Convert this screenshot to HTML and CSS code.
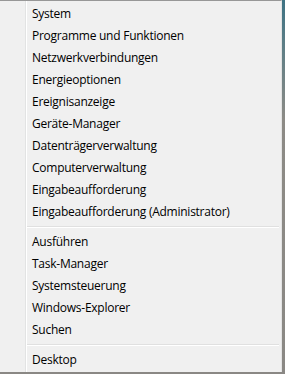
FILE: index.html
```html
<!DOCTYPE html>
<html>
<head>
  <meta charset="UTF-8">
  <title>Win+X Menü</title>
  <link rel="stylesheet" href="styles.css">
</head>
<body>
  <div class="menu">
    <ul class="group">
      <li>System</li>
      <li>Programme und Funktionen</li>
      <li>Netzwerkverbindungen</li>
      <li>Energieoptionen</li>
      <li>Ereignisanzeige</li>
      <li>Geräte-Manager</li>
      <li>Datenträgerverwaltung</li>
      <li>Computerverwaltung</li>
      <li>Eingabeaufforderung</li>
      <li>Eingabeaufforderung (Administrator)</li>
    </ul>
    <div class="sep"></div>
    <ul class="group">
      <li>Ausführen</li>
      <li>Task-Manager</li>
      <li>Systemsteuerung</li>
      <li>Windows-Explorer</li>
      <li>Suchen</li>
    </ul>
    <div class="sep"></div>
    <ul class="group">
      <li>Desktop</li>
    </ul>
  </div>
</body>
</html>
```

FILE: styles.css
```css
*, *:before, *:after {
  box-sizing: border-box;
}

html, body {
  margin: 0;
  height: 100%;
}

body {
  background: linear-gradient(to bottom, #3d7283 0, #5a7d86 40px, #8d8b86 120px, #8a8884 100%);
  font-family: "Open Sans", "Noto Sans", sans-serif;
  font-size: 12px;
  letter-spacing: -0.25px;
  color: #000;
  overflow: hidden;
}

.menu {
  width: 282px;
  height: 372px;
  background: #f0f0f0;
  border-top: 1px solid #979797;
  border-right: 1px solid #e3e3e3;
  padding-top: 2px;
  background-image: linear-gradient(to right, transparent 25px, #e2e3e3 25px, #e2e3e3 26px, #fff 26px, #fff 27px, transparent 27px);
}

.group {
  list-style: none;
  margin: 0;
  padding: 0;
}

.group li {
  height: 22px;
  line-height: 22px;
  padding-left: 32px;
  white-space: nowrap;
}

.sep {
  height: 8px;
  display: flex;
  align-items: center;
  padding-left: 27px;
  padding-right: 2px;
}

.sep:before {
  content: "";
  display: block;
  flex: 1;
  height: 2px;
  border-top: 1px solid #e0e0e0;
  border-bottom: 1px solid #fff;
}
```
